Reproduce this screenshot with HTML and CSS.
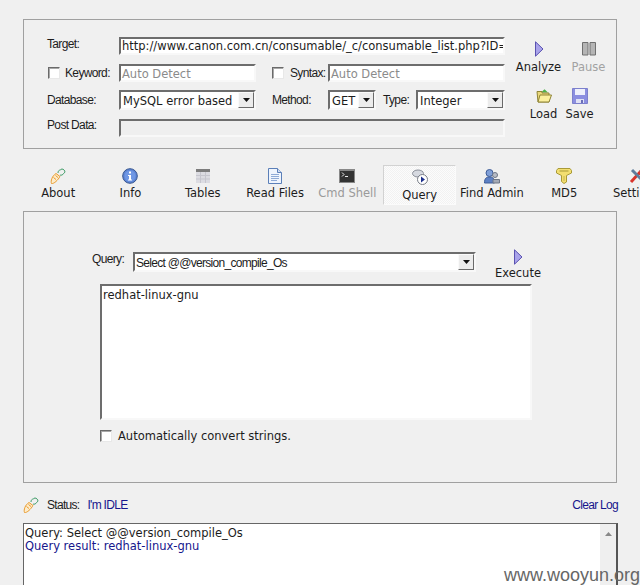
FILE: index.html
```html
<!DOCTYPE html>
<html lang="en">
<head>
<meta charset="utf-8">
<title>Havij</title>
<link rel="stylesheet" href="styles.css">
</head>
<body>
<svg class="defs" width="0" height="0">
  <defs>
    <symbol id="play" viewBox="0 0 10 16"><path d="M1.500 .8V15.200L9 8Z" fill="#a9a3ea" stroke="#5a52b0"/></symbol>
    <symbol id="carrot" viewBox="0 0 16 16"><path d="M1.500 15.500C.5 13 2 8 6 5.500L10 8.500C8 12 4 16 1.500 15.500Z" fill="#fdeccb" stroke="#e99a2c"/><path d="M3.500 9.500 6 11.500M5.500 7.500 8 9.500" stroke="#e99a2c" fill="none"/><path d="M8 5C8 3 9 2 10.500 2C10.500 1 13 .5 14 2C15.500 3 15 5 13.500 5.500C13 7 11 7.500 10 7" fill="none" stroke="#3f9c68"/></symbol>
    <symbol id="arrow" viewBox="0 0 7 4"><path d="M0 0H7L3.500 4Z" fill="#111"/></symbol>
  </defs>
</svg>
<div class="app">
  <section class="panel top">
    <div class="form">
      <span class="lab up">Target:</span>
      <div class="field wide url">http://www.canon.com.cn/consumable/_c/consumable_list.php?ID=</div>

      <label class="lab chk"><i class="box"></i>Keyword:</label>
      <div class="field hint">Auto Detect</div>
      <span></span>
      <label class="lab chk syn"><i class="box"></i>Syntax:</label>
      <div class="field hint span4">Auto Detect</div>

      <span class="lab">Database:</span>
      <div class="field combo"><span>MySQL error based</span><b class="drop"><svg width="7" height="4"><use href="#arrow"/></svg></b></div>
      <span></span>
      <span class="lab">Method:</span>
      <div class="field combo"><span>GET</span><b class="drop"><svg width="7" height="4"><use href="#arrow"/></svg></b></div>
      <span></span>
      <span class="lab">Type:</span>
      <div class="field combo"><span>Integer</span><b class="drop"><svg width="7" height="4"><use href="#arrow"/></svg></b></div>

      <span class="lab upmore">Post Data:</span>
      <div class="field wide off"></div>
    </div>
    <div class="actions">
      <div class="act analyze"><svg width="10" height="16"><use href="#play"/></svg><span>Analyze</span></div>
      <div class="act pause"><svg width="14" height="14" viewBox="0 0 14 14"><path d="M.5 .5H6V13H.5ZM8 .5H13.500V13H8Z" fill="#b5b5b5" stroke="#707070"/></svg><span>Pause</span></div>
      <div class="act load"><svg width="16" height="15" viewBox="0 0 16 15"><path d="M5 4 8.500 .8 12 4Z" fill="#4eb04a"/><path d="M1 3H6V4.500H13V13.500H2Z" fill="#e9d77a" stroke="#8f8436"/><path d="M4 6.500H15.500L13 13.500H2Z" fill="#fbef9e" stroke="#8f8436"/></svg><span>Load</span></div>
      <div class="act save"><svg width="16" height="16" viewBox="0 0 16 16"><path d="M.5 .5H15.500V15.500H.5Z" fill="#8b8ee0" stroke="#7c80cc"/><path d="M3 1H13V7H3Z" fill="#eef0fb"/><path d="M4 11H12V15H4Z" fill="#dfe1f5"/><path d="M9 12H11V15H9Z" fill="#6a6eb8"/></svg><span>Save</span></div>
    </div>
  </section>

  <nav class="tabs">
    <div class="tab"><svg width="16" height="16"><use href="#carrot"/></svg><span>About</span></div>
    <div class="tab"><svg width="16" height="16" viewBox="0 0 16 16"><circle cx="8" cy="8" r="7.300" fill="#5f86d6" stroke="#36558f"/><circle cx="8" cy="8" r="5.500" fill="#6f97e4"/><path d="M7 3.500H9V5.500H7ZM6 7H9V11.500H10V12.500H6V11.500H7V8H6Z" fill="#fff"/></svg><span>Info</span></div>
    <div class="tab"><svg width="14" height="14" viewBox="0 0 14 14"><path d="M0 0H14V3H0Z" fill="#7c7c7c"/><path d="M0 3H14V14H0Z" fill="#dcdce2"/><path d="M0 6.500H14M0 10H14M4.500 3V14M9.500 3V14" stroke="#c6c6ce"/></svg><span>Tables</span></div>
    <div class="tab"><svg width="14" height="16" viewBox="0 0 14 16"><path d="M.5 .5H9.500L13.500 4.500V15.500H.5Z" fill="#eef4fd" stroke="#5b7fb8"/><path d="M9.500 .5V4.500H13.500" fill="#cfdcf2" stroke="#5b7fb8"/><path d="M3 6.500H11M3 8.500H11M3 10.500H11M3 12.500H9" stroke="#8eaad6"/></svg><span>Read Files</span></div>
    <div class="tab dim"><svg width="16" height="14" viewBox="0 0 16 14"><path d="M0 0H16V14H0Z" fill="#888"/><path d="M1 2H15V13H1Z" fill="#333"/><path d="M3 3.500 5 5.500 3 7.500M6 7.500H9" stroke="#eee" fill="none"/></svg><span>Cmd Shell</span></div>
    <div class="tab on"><svg width="16" height="16" viewBox="0 0 16 16"><ellipse cx="6" cy="4.500" rx="5.500" ry="3.500" fill="#d6d9e0" stroke="#8a8f99"/><circle cx="10.500" cy="10.500" r="5" fill="#fff" stroke="#777c86"/><path d="M9 7.500V13.500L13 10.500Z" fill="#1c2f8c"/></svg><span>Query</span></div>
    <div class="tab"><svg width="16" height="16" viewBox="0 0 16 16"><circle cx="5.500" cy="5" r="3.500" fill="#7f9fd8" stroke="#3e5c97"/><path d="M.5 15C.5 10 2.500 9 5.500 9S10.500 10 10.500 15Z" fill="#5d80c4" stroke="#3e5c97"/><circle cx="11" cy="7" r="2.500" fill="#b7bcc6" stroke="#6e7686"/><path d="M9 15V11.500H15.500V15Z" fill="#a3a9b6" stroke="#6e7686"/></svg><span>Find Admin</span></div>
    <div class="tab"><svg width="16" height="16" viewBox="0 0 16 16"><path d="M2 .5H14L15.500 2.500V5L10.500 7.500V14L8 15.500 5.500 13.500V7.500L.5 5V2.500Z" fill="#f3df70" stroke="#a99a37"/><path d="M3.500 3H12.500" stroke="#a99a37"/><path d="M8 8V13" stroke="#c9b64f"/></svg><span>MD5</span></div>
    <div class="tab"><svg width="16" height="16" viewBox="0 0 16 16"><path d="M2 14 12 3" stroke="#d9342b" stroke-width="3"/><path d="M3 2 14 13" stroke="#5f7d9c" stroke-width="3"/><circle cx="13" cy="3" r="2" fill="#e8e8e8" stroke="#888"/></svg><span>Settings</span></div>
  </nav>

  <section class="panel query">
    <div class="qrow">
      <span class="lab qlab">Query:</span>
      <div class="field combo qcombo"><span>Select @@version_compile_Os</span><b class="drop"><svg width="7" height="4"><use href="#arrow"/></svg></b></div>
      <div class="act exec"><svg width="10" height="16"><use href="#play"/></svg><span>Execute</span></div>
    </div>
    <div class="field result">redhat-linux-gnu</div>
    <label class="auto"><i class="box"></i>Automatically convert strings.</label>
  </section>

  <div class="status">
    <svg width="16" height="16"><use href="#carrot"/></svg>
    <span class="lab slab">Status:</span>
    <span class="idle">I'm IDLE</span>
    <a class="clear">Clear Log</a>
  </div>

  <section class="log">
    <div class="logtext">
      <div>Query: Select @@version_compile_Os</div>
      <div class="res">Query result: redhat-linux-gnu</div>
    </div>
    <div class="scroll"><svg width="7" height="4" viewBox="0 0 7 4"><path d="M0 4H7L3.500 0Z" fill="#888"/></svg></div>
  </section>
</div>
<div class="mark">www.wooyun.org</div>
</body>
</html>
```

FILE: styles.css
```css
* { box-sizing: border-box; }
html, body { margin: 0; height: 100%; }
body {
  position: relative;
  width: 640px;
  height: 585px;
  overflow: hidden;
  background: #f0f0f0;
  color: #1c1c1c;
  font: 11.500px "DejaVu Sans", sans-serif;
}
.defs { position: absolute; }
.app { padding: 19px 0 0 23px; width: 640px; overflow: hidden; }
.panel { width: 594px; border: 1px solid #a0a0a0; }
.lab { font: 12px "Liberation Sans", sans-serif; letter-spacing: -.65px; }
.up { margin-bottom: 4px; }
.upmore { margin-bottom: 6px; }

.top { height: 130px; display: flex; padding: 17px 0 0 23px; }
.form {
  display: grid;
  grid-template-columns: 72px 137px 16px 56px 48px 7px 33px 89px;
  grid-template-rows: 18px 18px 20px 18px;
  row-gap: 8.500px;
  align-items: center;
  width: 458px;
}
.chk { display: flex; align-items: center; gap: 5px; margin-left: 1px; }
.syn { margin-left: 0; gap: 6px; }
.box {
  display: block;
  flex: none;
  width: 12px;
  height: 12px;
  background: #fff;
  border: 1px solid;
  border-color: #6a6a6a #e8e8e8 #e8e8e8 #6a6a6a;
  box-shadow: inset 1px 1px 0 #a8a8a8;
}
.field {
  height: 100%;
  min-width: 0;
  background: #fff;
  border: 2px solid;
  border-color: #6d6d6d #f8f8f8 #f8f8f8 #6d6d6d;
  padding: 0 0 0 1px;
  line-height: 14px;
  white-space: nowrap;
  overflow: hidden;
}
.wide { grid-column: 2 / 9; }
.span4 { grid-column: 5 / 9; }
.hint { color: #8b8b8b; padding-top: 1px; }
.off { background: #efefef; }
.combo { display: flex; justify-content: space-between; align-items: center; padding: 0 0 0 2px; }
.combo span { padding-top: 1px; }
.drop {
  flex: none;
  width: 16px;
  height: 16px;
  display: flex;
  align-items: center;
  justify-content: center;
  background: #ececec;
  border: 1px solid;
  border-color: #fafafa #6a6a6a #6a6a6a #fafafa;
}
.drop svg { display: block; }

.actions {
  display: grid;
  grid-template-columns: 55px 45px;
  grid-template-rows: 48px 48px;
  margin: 3px 0 0 6px;
  width: 100px;
  height: 96px;
}
.act {
  display: flex;
  flex-direction: column;
  align-items: center;
  gap: 3px;
  white-space: nowrap;
}
.act svg { display: block; flex: none; height: 16px; }
.analyze, .pause { padding-top: 1px; }
.pause { color: #a2a2a2; }
.load { margin-left: 16.500px; width: 32px; }
.save { margin-left: -2.500px; width: 32px; }

.tabs { display: flex; height: 62px; padding-top: 19px; margin-left: -1px; }
.tab {
  flex: none;
  width: 72.300px;
  display: flex;
  flex-direction: column;
  align-items: center;
  gap: 2px;
  height: 34px;
  white-space: nowrap;
}
.tab svg { display: block; flex: none; height: 16px; }
.dim { color: #9a9a9a; }
.on {
  height: 40px;
  margin-top: -3px;
  padding-top: 3px;
  gap: 3px;
  background: repeating-conic-gradient(#fcfcfc 0 25%, #f2f2f2 0 50%) 0 0 / 2px 2px;
  border: 1px solid;
  border-color: #d2d2d2 #fbfbfb #fbfbfb #d2d2d2;
}

.query { height: 272px; padding: 37px 0 0 76px; }
.qrow { display: flex; align-items: flex-start; height: 35px; }
.qlab { width: 33px; margin: 3px 8px 0 -8px; line-height: 14px; }
.qcombo {
  width: 343px;
  height: 20px;
  margin-top: 3px;
  padding-left: 1px;
  font: 12px "Liberation Sans", sans-serif;
  letter-spacing: -.7px;
}
.exec { width: 44px; margin-left: 20px; gap: 1px; }
.result { width: 432px; height: 136px; padding: 2px 0 0 1px; white-space: normal; }
.auto { display: flex; align-items: center; gap: 6px; margin-top: 10px; height: 12px; }

.status {
  display: flex;
  align-items: center;
  width: 595px;
  height: 40px;
  padding-top: 4px;
  font: 12px "Liberation Sans", sans-serif;
  letter-spacing: -.7px;
}
.slab { margin-left: 8px; letter-spacing: -.7px; }
.idle { color: #16168c; margin-left: 8px; }
.clear { color: #16168c; margin-left: auto; }

.log {
  display: flex;
  width: 595px;
  height: 70px;
  background: #fff;
  border: 1px solid #666;
  border-bottom: 0;
  border-right: 2px solid #555;
  line-height: 13px;
}
.logtext { flex: 1; padding: 3px 0 0 1px; }
.res { color: #16168c; }
.scroll { flex: none; width: 16px; background: #efefef; display: flex; justify-content: center; padding-top: 8px; }
.scroll svg { display: block; }

.mark {
  position: absolute;
  right: 0;
  bottom: 0;
  color: #666;
  font: 18px "Liberation Sans", sans-serif;
  line-height: 20px;
}
```
